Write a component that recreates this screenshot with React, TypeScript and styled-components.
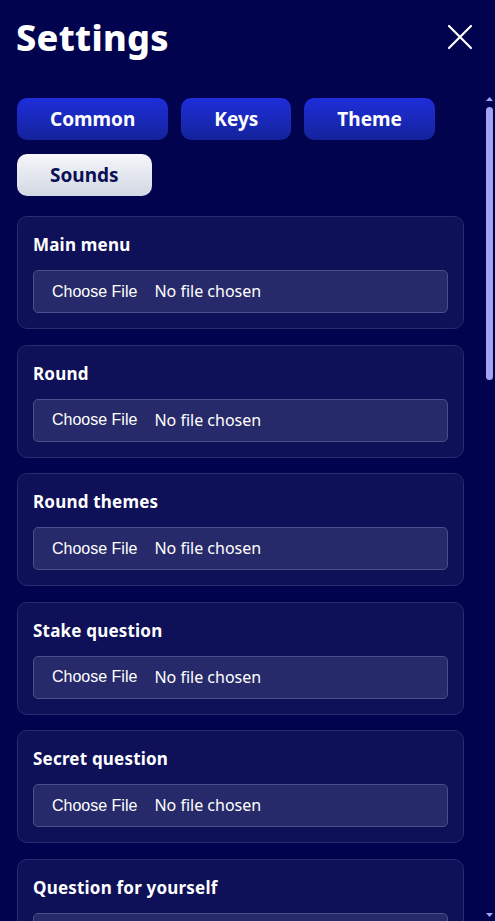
import React from 'react';
import styled, {createGlobalStyle} from 'styled-components';

const GlobalStyle = createGlobalStyle`
  html, body {
    margin: 0;
    padding: 0;
    background: #02034f;
    height: 100%;
    overflow: hidden;
  }

  * {
    box-sizing: border-box;
  }
`;

const THUMB = '#a3a3f5';

const Page = styled.div`
  display: flex;
  flex-direction: column;
  height: 921px;
  background: #02034f;
  color: #fff;
  font-family: 'Noto Sans', sans-serif;
`;

const Header = styled.div`
  display: flex;
  align-items: flex-start;
  justify-content: space-between;
  padding: 14px 22px 0 16px;
  height: 96px;
  flex-shrink: 0;
`;

const Title = styled.h1`
  margin: 0;
  font-size: 36px;
  font-weight: 800;
  letter-spacing: 0.3px;
  line-height: 48px;
`;

const CloseButton = styled.button`
  background: none;
  border: none;
  padding: 0;
  margin-top: 10px;
  width: 26px;
  height: 26px;
  cursor: pointer;
  display: flex;
`;

const Body = styled.div`
  flex: 1;
  min-height: 0;
  display: flex;
`;

const Scroller = styled.div`
  flex: 1;
  overflow-y: auto;
  padding: 2px 16px 16px 17px;
  scrollbar-width: none;

  &::-webkit-scrollbar {
    display: none;
  }
`;

const ScrollRail = styled.div`
  width: 15px;
  flex-shrink: 0;
  display: flex;
  flex-direction: column;
  align-items: flex-start;
  padding: 1px 2px 4px 6px;
`;

const ScrollThumb = styled.div`
  width: 7px;
  height: 273px;
  margin-top: 6px;
  border-radius: 4px;
  background: ${THUMB};
`;

const RailSpacer = styled.div`
  flex: 1;
`;

const Tabs = styled.div`
  display: flex;
  flex-wrap: wrap;
  gap: 14px 13px;
  margin-bottom: 20px;
`;

const Tab = styled.button<{ $active?: boolean }>`
  height: 42px;
  padding: 0 33px;
  border: none;
  border-radius: 10px;
  font-family: 'Noto Sans', sans-serif;
  font-size: 19px;
  font-weight: 700;
  cursor: pointer;
  color: ${p => p.$active ? '#0b0f55' : '#fff'};
  background: ${p => p.$active
    ? 'linear-gradient(180deg, #f6f6fb 0%, #d2d8e2 100%)'
    : 'linear-gradient(180deg, #1e2edb 0%, #14239a 100%)'};
`;

const Cards = styled.div`
  display: flex;
  flex-direction: column;
  gap: 15.6px;
`;

const Card = styled.section`
  background: #0e1058;
  border: 1px solid #282b6c;
  border-radius: 10px;
  padding: 16px 15px 15px 15px;
`;

const CardTitle = styled.h2`
  margin: 0 0 13px;
  font-size: 17px;
  font-weight: 700;
  letter-spacing: 0.2px;
  line-height: 24px;
`;

const FileInput = styled.input`
  display: block;
  width: 100%;
  height: 43px;
  padding: 0 8px;
  background: #272a6a;
  border: 1px solid #4b4f8c;
  border-radius: 5px;
  color: #fff;
  font-family: 'Noto Sans', sans-serif;
  font-size: 16px;

  &::file-selector-button {
    background: transparent;
    border: none;
    color: #fff;
    font-family: 'Liberation Sans', Arial, sans-serif;
    font-size: 16px;
    padding: 0 10px;
    margin-right: 7px;
    height: 41px;
  }
`;

const sounds = [
  'Main menu',
  'Round',
  'Round themes',
  'Stake question',
  'Secret question',
  'Question for yourself',
  'Question for all',
  'Final round',
  'Timeout',
  'Answer right',
  'Answer wrong',
  'Game end',
  'Final thinking',
  'Applause',
  'No risk question',
  'Player press',
  'Round begin',
  'Question select',
];

const CloseIcon = () => (
  <svg width="26" height="26" viewBox="0 0 26 26" fill="none" stroke="#fff" strokeWidth="2.2" strokeLinecap="round">
    <path d="M2 2 L24 24 M24 2 L2 24"/>
  </svg>
);

const Arrow = ({down}: { down?: boolean }) => (
  <svg width="7" height="4" viewBox="0 0 7 4">
    <path d={down ? 'M0 0 H7 L3.5 4 Z' : 'M0 4 H7 L3.5 0 Z'} fill={THUMB}/>
  </svg>
);

const App = (): JSX.Element => {
  return (
    <Page>
      <GlobalStyle/>
      <Header>
        <Title>Settings</Title>
        <CloseButton aria-label="Close"><CloseIcon/></CloseButton>
      </Header>
      <Body>
        <Scroller>
          <Tabs>
            <Tab>Common</Tab>
            <Tab>Keys</Tab>
            <Tab>Theme</Tab>
            <Tab $active>Sounds</Tab>
          </Tabs>
          <Cards>
            {sounds.map(name => (
              <Card key={name}>
                <CardTitle>{name}</CardTitle>
                <FileInput type="file" accept="audio/*"/>
              </Card>
            ))}
          </Cards>
        </Scroller>
        <ScrollRail aria-hidden>
          <Arrow/>
          <ScrollThumb/>
          <RailSpacer/>
          <Arrow down/>
        </ScrollRail>
      </Body>
    </Page>
  );
};

export default App;
